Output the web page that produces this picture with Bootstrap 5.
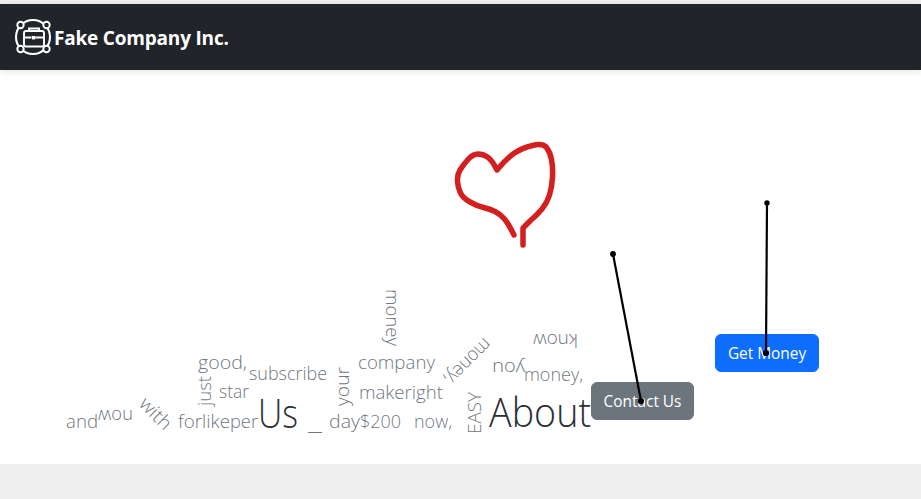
<!DOCTYPE html>
<html lang="en">
<head>
  <meta charset="UTF-8">
  <title>Fake Company Inc.</title>
  <meta name="viewport" content="width=device-width, initial-scale=1">
  <link href="https://cdn.jsdelivr.net/npm/bootstrap@5.3.0/dist/css/bootstrap.min.css" rel="stylesheet">
  <style>
    html, body { height: 100%; }
    body { font-family: "Open Sans", "Noto Sans", sans-serif; padding-top: 4px; background-color: #eee; }
    .top-nav { height: 66px; padding: 0 0 0 13px; z-index: 1; box-shadow: 0 2px 7px rgba(0, 0, 0, .1); }
    .top-nav .navbar-brand { padding: 0; margin: 0; font-size: 19px; font-weight: 700; letter-spacing: -.2px; }
    .brand-name { padding-top: 2px; }
    .page-area { height: 394px; background: #fff; }
    .page-foot { height: 35px; background: #eee; }
    .page-btn { font-size: 15.4px; position: absolute; width: 103px; height: 38px; padding: 2px 0 0; }
    .btn-money { left: 715px; top: 264px; width: 104px; }
    .btn-contact { left: 591px; top: 312px; }
    .draw-layer { position: absolute; left: 0; top: 0; width: 921px; height: 394px; pointer-events: none; }
    .word-layer text { font-family: "Open Sans", sans-serif; font-weight: 300; fill: #6f7780; font-size: 19px; }
    .word-layer text.big-word { fill: #2a2f35; font-size: 41px; }
    .word-layer text.dash-word { font-size: 24px; }
  </style>
</head>
<body>
  <nav class="navbar navbar-dark bg-dark top-nav position-relative">
    <a class="navbar-brand d-flex align-items-center" href="#">
      <svg width="41" height="40" viewBox="13 17 41 40" fill="none" stroke="#fff" stroke-width="1.9">
        <circle cx="33" cy="37" r="17" stroke-width="2.1"/>
        <circle cx="20.5" cy="25" r="3.2" fill="#212529"/>
        <circle cx="46.5" cy="25" r="3.2" fill="#212529"/>
        <circle cx="20.5" cy="49" r="3.2" fill="#212529"/>
        <circle cx="46.5" cy="49" r="3.2" fill="#212529"/>
        <rect x="24" y="31" width="20" height="15.5" rx="2"/>
        <path d="M29 31v-2.5h10V31M24 37.5h7.5M35.5 37.5H44"/>
        <rect x="32" y="36" width="3.4" height="3.4" fill="#fff" stroke="none"/>
      </svg>
      <span class="brand-name">Fake Company Inc.</span>
    </a>
  </nav>

  <main class="page-area position-relative">
    <svg class="draw-layer word-layer" viewBox="0 70 921 394">
      <text x="66" y="428" textLength="32" lengthAdjust="spacingAndGlyphs">and</text>
      <text transform="rotate(180 115.5 416)" x="98" y="422" textLength="35" lengthAdjust="spacingAndGlyphs">now</text>
      <text transform="rotate(45 138 405)" x="138" y="405" textLength="37" lengthAdjust="spacingAndGlyphs">with</text>
      <text x="178" y="428" textLength="24" lengthAdjust="spacingAndGlyphs">for</text>
      <text x="202" y="428" textLength="28" lengthAdjust="spacingAndGlyphs">like</text>
      <text x="230" y="428" textLength="28" lengthAdjust="spacingAndGlyphs">per</text>
      <text class="big-word" x="258" y="428" textLength="40" lengthAdjust="spacingAndGlyphs">Us</text>
      <text class="dash-word" x="308" y="430" textLength="14" lengthAdjust="spacingAndGlyphs">_</text>
      <text x="329" y="428" textLength="31" lengthAdjust="spacingAndGlyphs">day</text>
      <text x="360" y="428" textLength="41" lengthAdjust="spacingAndGlyphs">$200</text>
      <text x="414" y="428" textLength="38" lengthAdjust="spacingAndGlyphs">now,</text>
      <text transform="rotate(-90 481 434)" x="481" y="434" textLength="42" lengthAdjust="spacingAndGlyphs">EASY</text>
      <text class="big-word" x="489" y="427" textLength="102" lengthAdjust="spacingAndGlyphs">About</text>
      <text transform="rotate(-90 211 406)" x="211" y="406" textLength="30" lengthAdjust="spacingAndGlyphs">just</text>
      <text x="198" y="369" textLength="49" lengthAdjust="spacingAndGlyphs">good,</text>
      <text x="219" y="398" textLength="30" lengthAdjust="spacingAndGlyphs">star</text>
      <text x="249" y="380" textLength="78" lengthAdjust="spacingAndGlyphs">subscribe</text>
      <text transform="rotate(-90 349 406)" x="349" y="406" textLength="39" lengthAdjust="spacingAndGlyphs">your</text>
      <text x="358" y="369" textLength="77" lengthAdjust="spacingAndGlyphs">company</text>
      <text x="359" y="399" textLength="84" lengthAdjust="spacingAndGlyphs">makeright</text>
      <text transform="rotate(90 386 289)" x="386" y="289" textLength="57" lengthAdjust="spacingAndGlyphs">money</text>
      <text transform="rotate(135 484 337)" x="484" y="337" textLength="58" lengthAdjust="spacingAndGlyphs">money,</text>
      <text transform="rotate(180 508.5 368)" x="492" y="374" textLength="33" lengthAdjust="spacingAndGlyphs">you</text>
      <text x="524" y="381" textLength="59" lengthAdjust="spacingAndGlyphs">money,</text>
      <text transform="rotate(180 555.5 340)" x="533" y="346" textLength="45" lengthAdjust="spacingAndGlyphs">know</text>
      <path d="M514 235Q508 223 504 218.5Q500 214 495 211.5Q490 209 483.5 207.5Q477 206 470 202Q463 198 460.5 193Q458 188 457.5 181.5Q457 175 460 170Q463 165 468 159.5Q473 154 478 154Q483 154 487.5 157Q492 160 497 170Q507 158 514.5 153Q522 148 532.5 145.5Q543 143 546.5 147.5Q550 152 551.5 159.5Q553 167 552.5 177Q552 187 549.5 195Q547 203 542 209Q537 215 530 221L523 228L523 245" fill="none" stroke="#d41f1f" stroke-width="5.5" stroke-linecap="round" stroke-linejoin="round"/>
    </svg>
    <a class="btn btn-primary page-btn btn-money d-flex align-items-center justify-content-center" href="#">Get Money</a>
    <a class="btn btn-secondary page-btn btn-contact d-flex align-items-center justify-content-center" href="#">Contact Us</a>
    <svg class="draw-layer" viewBox="0 70 921 394">
      <g stroke="#000" stroke-width="2.2" fill="#000">
        <line x1="613" y1="254" x2="641" y2="401"/>
        <line x1="767" y1="203" x2="766" y2="353"/>
        <circle cx="613" cy="254" r="1.8"/>
        <circle cx="641" cy="401" r="2"/>
        <circle cx="767" cy="203" r="1.6"/>
        <circle cx="766" cy="353" r="2"/>
      </g>
    </svg>
  </main>
  <footer class="page-foot"></footer>

  <script src="https://cdn.jsdelivr.net/npm/bootstrap@5.3.0/dist/js/bootstrap.bundle.min.js"></script>
</body>
</html>
